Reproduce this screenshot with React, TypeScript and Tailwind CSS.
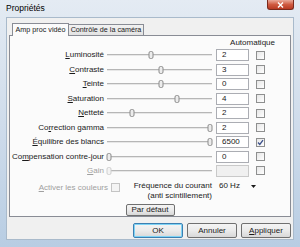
import React from 'react';

type Row = {
    label: string;
    acc: number;
    value: string;
    pos: number;
    auto: boolean;
    disabled?: boolean;
};

const ROWS: Row[] = [
    { label: 'Luminosité', acc: 0, value: '2', pos: 0.42, auto: false },
    { label: 'Contraste', acc: 0, value: '3', pos: 0.51, auto: false },
    { label: 'Teinte', acc: 0, value: '0', pos: 0.51, auto: false },
    { label: 'Saturation', acc: 0, value: '4', pos: 0.67, auto: false },
    { label: 'Netteté', acc: 0, value: '2', pos: 0.24, auto: false },
    { label: 'Correction gamma', acc: 2, value: '2', pos: 0.98, auto: false },
    { label: 'Équilibre des blancs', acc: 0, value: '6500', pos: 0.98, auto: true },
    { label: 'Compensation contre-jour', acc: 2, value: '0', pos: 0.02, auto: false },
    { label: 'Gain', acc: 0, value: '', pos: 0.02, auto: false, disabled: true },
];

const Acc: React.FC<{ text: string; idx: number }> = ({ text, idx }) => (
    <>
        {text.slice(0, idx)}
        <span className="underline underline-offset-[1px]">{text[idx]}</span>
        {text.slice(idx + 1)}
    </>
);

const CheckBox: React.FC<{ checked?: boolean; disabled?: boolean }> = ({ checked, disabled }) => (
    <div
        className={`w-[9px] h-[9px] border flex items-center justify-center ${
            disabled ? 'border-[#c4c4c4] bg-[#f4f4f4]' : 'border-[#8e8f8f] bg-gradient-to-br from-[#e6e6e6] to-[#ffffff]'
        }`}
    >
        {checked && (
            <svg width="7" height="7" viewBox="0 0 7 7">
                <path d="M1 3.5 L2.8 5.4 L6 1.2" stroke="#3a4f8a" strokeWidth="1.3" fill="none" />
            </svg>
        )}
    </div>
);

const Slider: React.FC<{ pos: number; disabled?: boolean }> = ({ pos, disabled }) => (
    <div className="relative w-[105px] h-full">
        <div className="absolute left-0 right-0 top-1/2 h-[2px] -translate-y-1/2 border-t border-[#b6b6b6] bg-[#e7e7e7]" />
        <div
            className={`absolute top-1/2 -translate-y-1/2 -translate-x-1/2 w-[5px] h-[8px] rounded-[2px] border ${
                disabled ? 'border-[#cfcfcf] bg-[#f3f3f3]' : 'border-[#8c8c8c] bg-[#ececec]'
            }`}
            style={{ left: `${pos * 100}%` }}
        />
    </div>
);

const Button: React.FC<{ children: React.ReactNode; def?: boolean; className?: string }> = ({ children, def, className }) => (
    <div
        className={`flex items-center justify-center rounded-[2px] border bg-gradient-to-b from-[#f4f4f4] via-[#ebebeb] to-[#d8d8d8] ${
            def ? 'border-[#3c7fb1] shadow-[inset_0_0_0_1px_#7ed3f5]' : 'border-[#707070]'
        } ${className ?? ''}`}
    >
        {children}
    </div>
);

export default function App() {
    return (
        <div
            className="w-[300px] h-[247px] overflow-hidden relative flex flex-col bg-gradient-to-b from-[#e4ebf3] via-[#cfdceb] to-[#b8cde3] text-[#1a1a1a]"
            style={{ fontFamily: '"Liberation Sans", Arial, sans-serif' }}
        >
            {/* title bar */}
            <div className="h-[16px] flex items-center pl-[6px] text-[8.5px] text-black shrink-0">
                Propriétés
            </div>
            <div className="absolute top-0 right-[6px] w-[27px] h-[10px] rounded-b-[3px] border border-t-0 border-[#7a2a1c] bg-gradient-to-b from-[#e9a99a] via-[#cf5a40] to-[#b83a22] flex items-center justify-center">
                <svg width="7" height="6" viewBox="0 0 7 6">
                    <path d="M1 0.5 L6 5.5 M6 0.5 L1 5.5" stroke="#fff" strokeWidth="1.4" />
                </svg>
            </div>

            {/* client area */}
            <div className="flex-1 mx-[6px] mb-[7px] mt-[1px] bg-[#f0f0f0] border border-[#a9bacb] flex flex-col px-[2px] text-[8px]">
                {/* tabs */}
                <div className="flex items-end h-[17px] pl-[3px] shrink-0 text-[7.2px]">
                    <div className="h-[13px] w-[57px] border border-b-0 border-[#898c95] bg-[#fbfbfb] flex items-center justify-center relative top-[1px] z-10 whitespace-nowrap">
                        Amp proc vidéo
                    </div>
                    <div className="h-[11px] w-[75px] border border-b-0 border-l-0 border-[#898c95] bg-gradient-to-b from-[#f2f2f2] to-[#e3e3e3] flex items-center justify-center whitespace-nowrap">
                        Contrôle de la caméra
                    </div>
                </div>

                {/* panel */}
                <div className="h-[182px] border border-[#898c95] bg-[#fbfbfb] flex flex-col shrink-0">
                    <div className="h-[11px] mt-[1px] flex items-center justify-end pr-[15px]">Automatique</div>
                    {ROWS.map((r) => (
                        <div key={r.label} className="h-[14.6px] flex items-center">
                            <div className={`w-[94px] text-right whitespace-nowrap ${r.disabled ? 'text-[#a0a0a0]' : ''}`}>
                                <Acc text={r.label} idx={r.acc} />
                            </div>
                            <div className="ml-[3px] h-full">
                                <Slider pos={r.pos} disabled={r.disabled} />
                            </div>
                            <div
                                className={`ml-[4px] w-[33px] h-[12px] border flex items-center pl-[5px] ${
                                    r.disabled ? 'border-[#c9c9c9] bg-[#f0f0f0]' : 'border-[#abadb3] bg-white'
                                }`}
                            >
                                {r.value}
                            </div>
                            <div className="ml-[7px]">
                                <CheckBox checked={r.auto} />
                            </div>
                        </div>
                    ))}

                    {/* bottom options */}
                    <div className="grid grid-cols-[98px_3px_9px_92px_6px_40px] mt-[2px] h-[22px]">
                        <div className="flex justify-end items-start text-[#a0a0a0] pt-[2px] whitespace-nowrap">
                            <Acc text="Activer les couleurs" idx={0} />
                        </div>
                        <div />
                        <div className="pt-[3px]">
                            <CheckBox disabled />
                        </div>
                        <div className="flex flex-col items-end leading-[10px] whitespace-nowrap pt-[1px] min-w-0">
                            <span>Fréquence du courant</span>
                            <span>(anti scintillement)</span>
                        </div>
                        <div />
                        <div className="h-[12px] flex items-center justify-between pl-[1px] pr-[2px]">
                            <span>60 Hz</span>
                            <svg width="5" height="3" viewBox="0 0 5 3">
                                <path d="M0 0 H5 L2.5 3 Z" fill="#1a1a1a" />
                            </svg>
                        </div>
                    </div>
                    <div className="flex justify-center mt-[2px]">
                        <Button className="w-[49px] h-[12px]">Par défaut</Button>
                    </div>
                </div>

                {/* dialog buttons */}
                <div className="flex justify-end gap-[4px] mt-[6px]">
                    <Button def className="w-[50px] h-[15px]">OK</Button>
                    <Button className="w-[50px] h-[15px]">Annuler</Button>
                    <Button className="w-[50px] h-[15px]">
                        <Acc text="Appliquer" idx={0} />
                    </Button>
                </div>
            </div>
        </div>
    );
}
